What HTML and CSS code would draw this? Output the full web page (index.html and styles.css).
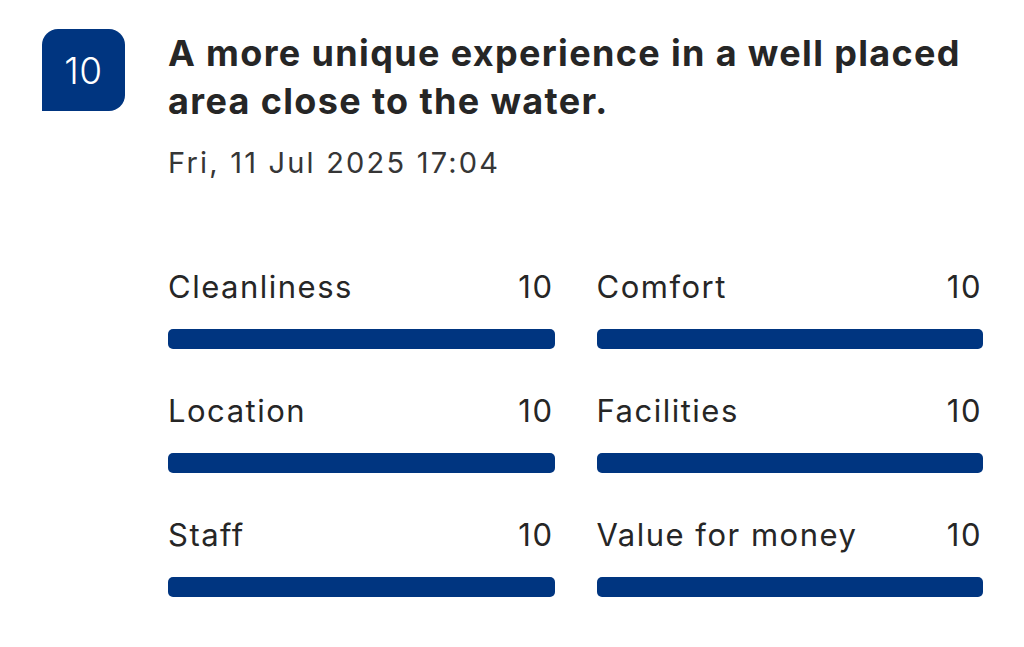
FILE: index.html
```html
<!DOCTYPE html>
<html lang="en">
<head>
<meta charset="UTF-8">
<title>Review</title>
<meta name="viewport" content="width=device-width,initial-scale=1">
<link rel="stylesheet" href="styles.css">
</head>
<body>

<div class="review">
  <div class="score-badge">10</div>
  <div class="review-body">
    <h2 class="review-title">A more unique experience in a well placed area close to the water.</h2>
    <div class="review-date">Fri, 11 Jul 2025 17:04</div>

    <div class="subscores">
      <div class="subscore">
        <div class="subscore-head"><span>Cleanliness</span><span>10</span></div>
        <div class="bar"><div class="bar-fill" style="width:100%"></div></div>
      </div>
      <div class="subscore">
        <div class="subscore-head"><span>Comfort</span><span>10</span></div>
        <div class="bar"><div class="bar-fill" style="width:100%"></div></div>
      </div>
      <div class="subscore">
        <div class="subscore-head"><span>Location</span><span>10</span></div>
        <div class="bar"><div class="bar-fill" style="width:100%"></div></div>
      </div>
      <div class="subscore">
        <div class="subscore-head"><span>Facilities</span><span>10</span></div>
        <div class="bar"><div class="bar-fill" style="width:100%"></div></div>
      </div>
      <div class="subscore">
        <div class="subscore-head"><span>Staff</span><span>10</span></div>
        <div class="bar"><div class="bar-fill" style="width:100%"></div></div>
      </div>
      <div class="subscore">
        <div class="subscore-head"><span>Value for money</span><span>10</span></div>
        <div class="bar"><div class="bar-fill" style="width:100%"></div></div>
      </div>
    </div>
  </div>
</div>

</body>
</html>
```

FILE: styles.css
```css
body {
  margin: 0;
  background: #fff;
  color: #262626;
  font-family: Inter, "Noto Sans", sans-serif;
}
.review {
  display: flex;
  gap: 43px;
  padding: 29px 41px 0 42px;
}
.score-badge {
  flex: none;
  width: 83px;
  height: 82px;
  background: #003580;
  color: #fff;
  border-radius: 16px 16px 16px 0;
  display: flex;
  align-items: center;
  justify-content: center;
  font-size: 37px;
  font-weight: 300;
  letter-spacing: 0.5px;
}
.review-body {
  flex: 1;
}
.review-title {
  margin: 0;
  font-size: 36px;
  line-height: 48px;
  font-weight: 700;
  letter-spacing: 1.35px;
  color: #262626;
}
.review-date {
  margin-top: 20px;
  font-size: 29px;
  line-height: 36px;
  letter-spacing: 2.2px;
  color: #363636;
}
.subscores {
  display: grid;
  grid-template-columns: 1fr 1fr;
  column-gap: 42px;
  row-gap: 44px;
  margin-top: 88px;
}
.subscore-head {
  display: flex;
  justify-content: space-between;
  font-size: 31px;
  line-height: 36px;
  letter-spacing: 1.5px;
  padding-right: 1px;
}
.bar {
  margin-top: 24px;
  height: 20px;
  border-radius: 5px;
  background: #e7e7e7;
  overflow: hidden;
}
.bar-fill {
  height: 100%;
  background: #003580;
}
```
